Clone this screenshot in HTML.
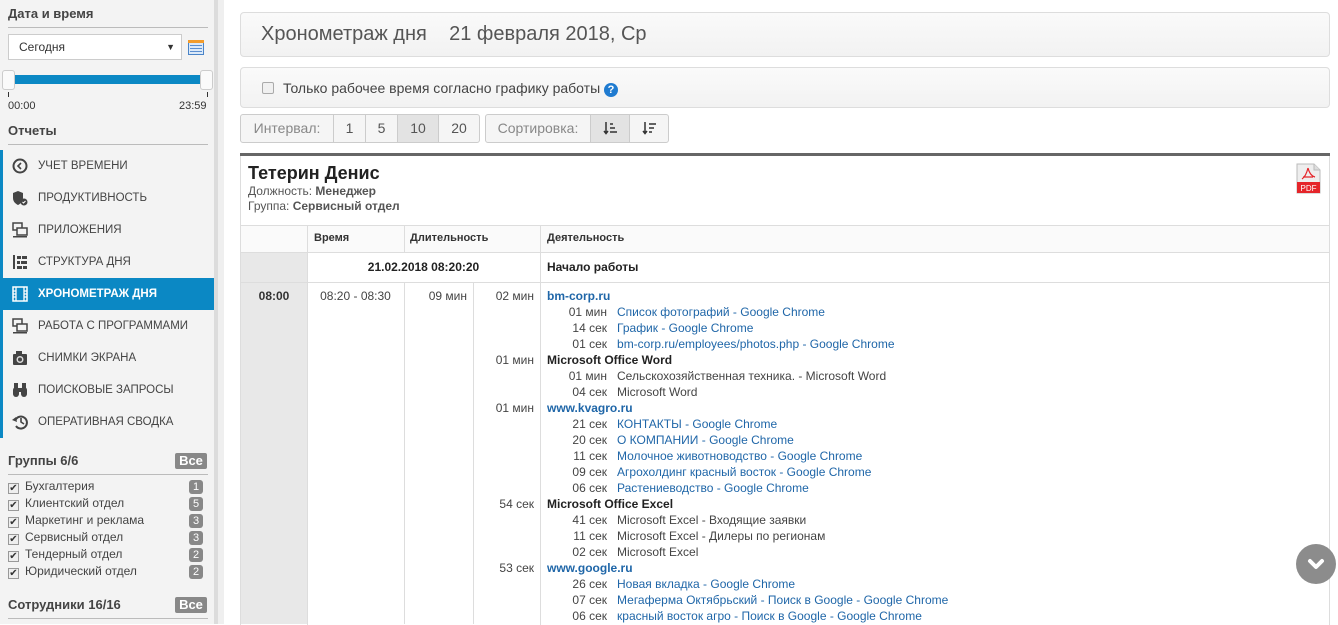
<!DOCTYPE html>
<html><head><meta charset="utf-8"><style>
*{box-sizing:border-box;margin:0;padding:0}
body{width:1338px;height:624px;overflow:hidden;background:#fff;font-family:"Liberation Sans",Arial,sans-serif;font-size:12px;color:#333;position:relative}
.a{position:absolute}
#sb{left:0;top:0;width:214px;height:624px;background:#f3f3f3}
.h{font-weight:bold;font-size:13px;color:#444;border-bottom:1px solid #bbb;left:8px;width:200px;height:22px}
.nav{left:0;width:208px;height:32px;line-height:32px;padding-left:38px;font-size:11.5px;color:#444}
.nav svg{position:absolute;left:12px;top:8px}
.grp{left:8px;font-size:12px;color:#444;height:17px;line-height:17px}
.cb{display:inline-block;width:11px;height:11px;border:1px solid #999;background:#eee;vertical-align:-1px;margin-right:6px;font-size:10px;line-height:9px;text-align:center;color:#333}
.bd{left:189px;width:14px;height:14px;background:#888;color:#fff;border-radius:3px;font-size:11px;text-align:center;line-height:14px}
.panel{border:1px solid #ddd;border-radius:4px;background:linear-gradient(#fafafa,#f2f2f2)}
.btn{height:29px;line-height:27px;border:1px solid #ccc;background:#f5f5f5;color:#555;font-size:14px;text-align:center}
.l{line-height:16px;height:16px;white-space:nowrap}
.r{text-align:right}
a{color:#1f66a8;text-decoration:none}
</style></head><body>
<div id="sb" class="a"></div>
<div class="a" style="left:214px;top:0;width:4px;height:624px;background:#dcdcdc"></div>
<div class="a" style="left:218px;top:0;width:6px;height:624px;background:#efefef"></div>

<div class="a h" style="top:6px">Дата и время</div>
<div class="a" style="left:8px;top:34px;width:174px;height:26px;border:1px solid #ccc;background:#fff;padding-left:10px;line-height:24px;color:#333">Сегодня<span class="a" style="right:6px;top:0;font-size:9px;color:#333">▼</span></div>
<svg class="a" style="left:188px;top:40px" width="16" height="15"><rect x="0.5" y="0.5" width="15" height="14" fill="#dbe9f8" stroke="#4a84c8"/><rect x="0" y="0" width="16" height="3" fill="#f39c2b"/><g fill="#5b8ed0"><rect x="2" y="5" width="12" height="1"/><rect x="2" y="8" width="12" height="1"/><rect x="2" y="11" width="12" height="1"/></g></svg>
<div class="a" style="left:10px;top:75px;width:196px;height:9px;background:#0b88c4"></div>
<div class="a" style="left:2px;top:70px;width:13px;height:20px;background:#fafafa;border:1px solid #ccc;border-radius:3px"></div>
<div class="a" style="left:200px;top:70px;width:13px;height:20px;background:#fafafa;border:1px solid #ccc;border-radius:3px"></div>
<div class="a" style="left:8px;top:92px;width:1px;height:5px;background:#333"></div>
<div class="a" style="left:207px;top:92px;width:1px;height:5px;background:#333"></div>
<div class="a" style="left:8px;top:100px;font-size:11px;color:#333">00:00</div>
<div class="a" style="left:179px;top:100px;font-size:11px;color:#333">23:59</div>

<div class="a h" style="top:123px">Отчеты</div>
<div class="a" style="left:0;top:150px;width:3px;height:288px;background:#0b88c4"></div>
<div class="a nav" style="top:150px"><svg width="16" height="16"><circle cx="8" cy="8" r="6.5" fill="none" stroke="#444" stroke-width="2"/><path d="M9 5 6 8 9 11" fill="none" stroke="#444" stroke-width="1.6"/></svg>УЧЕТ ВРЕМЕНИ</div>
<div class="a nav" style="top:182px"><svg width="16" height="16"><path d="M6 1 11 3v5c0 4-3 6-5 7-2-1-5-3-5-7V3z" fill="#444"/><circle cx="12" cy="12" r="3.5" fill="#444"/><path d="M10.5 12l1 1 2-2" stroke="#fff" fill="none"/></svg>ПРОДУКТИВНОСТЬ</div>
<div class="a nav" style="top:214px"><svg width="16" height="16"><rect x="1" y="1" width="9" height="7" fill="none" stroke="#444" stroke-width="1.5"/><rect x="5" y="6" width="10" height="7" fill="#f3f3f3" stroke="#444" stroke-width="1.5"/><rect x="1" y="14" width="14" height="1.5" fill="#444"/></svg>ПРИЛОЖЕНИЯ</div>
<div class="a nav" style="top:246px"><svg width="16" height="16"><rect x="1" y="1" width="2" height="14" fill="#444"/><g fill="#444"><rect x="5" y="2" width="4" height="3"/><rect x="10" y="2" width="5" height="3"/><rect x="5" y="7" width="3" height="3"/><rect x="9" y="7" width="6" height="3"/><rect x="5" y="12" width="5" height="3"/><rect x="11" y="12" width="4" height="3"/></g></svg>СТРУКТУРА ДНЯ</div>
<div class="a nav" style="top:278px;width:214px;background:#0b88c4;color:#fff;font-weight:bold"><svg width="16" height="16"><rect x="1" y="1" width="14" height="14" fill="none" stroke="#fff" stroke-width="1.5"/><path d="M4 1v14M12 1v14M1 5h3M1 8h3M1 11h3M12 5h3M12 8h3M12 11h3" stroke="#fff" stroke-width="1.3"/></svg>ХРОНОМЕТРАЖ ДНЯ</div>
<div class="a nav" style="top:310px"><svg width="16" height="16"><rect x="1" y="1" width="9" height="7" fill="none" stroke="#444" stroke-width="1.5"/><rect x="5" y="6" width="10" height="7" fill="#f3f3f3" stroke="#444" stroke-width="1.5"/><rect x="1" y="14" width="14" height="1.5" fill="#444"/></svg>РАБОТА С ПРОГРАММАМИ</div>
<div class="a nav" style="top:342px"><svg width="16" height="16"><rect x="1" y="4" width="14" height="11" rx="1" fill="#444"/><rect x="4" y="1" width="6" height="4" fill="#444"/><circle cx="8" cy="9.5" r="3.5" fill="#ddd"/><circle cx="8" cy="9.5" r="2" fill="#444"/></svg>СНИМКИ ЭКРАНА</div>
<div class="a nav" style="top:374px"><svg width="16" height="16"><rect x="1" y="5" width="6" height="10" rx="3" fill="#444"/><rect x="9" y="5" width="6" height="10" rx="3" fill="#444"/><rect x="6" y="6" width="4" height="4" fill="#444"/><rect x="2" y="1" width="4" height="5" fill="#444"/><rect x="10" y="1" width="4" height="5" fill="#444"/></svg>ПОИСКОВЫЕ ЗАПРОСЫ</div>
<div class="a nav" style="top:406px"><svg width="16" height="16"><path d="M3.5 6A6 6 0 1 1 4 12" fill="none" stroke="#444" stroke-width="2"/><path d="M0 6l4 -3 1 5z" fill="#444"/><path d="M9 4v4l3 2" fill="none" stroke="#444" stroke-width="1.6"/></svg>ОПЕРАТИВНАЯ СВОДКА</div>

<div class="a h" style="top:453px">Группы 6/6</div>
<div class="a" style="left:175px;top:453px;width:32px;height:16px;background:#888;color:#fff;font-weight:bold;font-size:13px;text-align:center;line-height:16px;border-radius:2px">Все</div>
<div class="a grp" style="top:478px"><span class="cb">✔</span>Бухгалтерия</div><div class="a bd" style="top:480px">1</div>
<div class="a grp" style="top:495px"><span class="cb">✔</span>Клиентский отдел</div><div class="a bd" style="top:497px">5</div>
<div class="a grp" style="top:512px"><span class="cb">✔</span>Маркетинг и реклама</div><div class="a bd" style="top:514px">3</div>
<div class="a grp" style="top:529px"><span class="cb">✔</span>Сервисный отдел</div><div class="a bd" style="top:531px">3</div>
<div class="a grp" style="top:546px"><span class="cb">✔</span>Тендерный отдел</div><div class="a bd" style="top:548px">2</div>
<div class="a grp" style="top:563px"><span class="cb">✔</span>Юридический отдел</div><div class="a bd" style="top:565px">2</div>
<div class="a h" style="top:597px">Сотрудники 16/16</div>
<div class="a" style="left:175px;top:597px;width:32px;height:16px;background:#888;color:#fff;font-weight:bold;font-size:13px;text-align:center;line-height:16px;border-radius:2px">Все</div>

<!-- main -->
<div class="a panel" style="left:240px;top:12px;width:1090px;height:45px;padding-left:20px;line-height:43px;font-size:20px;color:#555">Хронометраж дня&nbsp;&nbsp;&nbsp; 21 февраля 2018, Ср</div>
<div class="a panel" style="left:240px;top:67px;width:1090px;height:41px;padding-left:21px;line-height:40px;font-size:14px;color:#444"><span style="display:inline-block;width:12px;height:12px;border:1px solid #aaa;border-radius:2px;background:#f0f0f0;vertical-align:-1px;margin-right:9px"></span>Только рабочее время согласно графику работы <span style="display:inline-block;width:14px;height:14px;border-radius:50%;background:#1f7bd0;color:#fff;font-size:11px;font-weight:bold;text-align:center;line-height:14px;vertical-align:0">?</span></div>

<div class="a btn" style="left:240px;top:114px;width:94px;border-radius:3px 0 0 3px;color:#888">Интервал:</div>
<div class="a btn" style="left:333px;top:114px;width:33px">1</div>
<div class="a btn" style="left:365px;top:114px;width:33px">5</div>
<div class="a btn" style="left:397px;top:114px;width:42px;background:#e3e3e3">10</div>
<div class="a btn" style="left:438px;top:114px;width:42px;border-radius:0 3px 3px 0">20</div>
<div class="a btn" style="left:485px;top:114px;width:106px;border-radius:3px 0 0 3px;color:#888">Сортировка:</div>
<div class="a btn" style="left:590px;top:114px;width:40px;background:#e3e3e3"><svg width="14" height="14" style="vertical-align:-2px"><path d="M3 1v11M1 10l2 2.5L5 10" stroke="#333" fill="none" stroke-width="1.5"/><path d="M7 3h3M7 7h5M7 11h7" stroke="#333" stroke-width="1.5"/></svg></div>
<div class="a btn" style="left:629px;top:114px;width:40px;border-radius:0 3px 3px 0"><svg width="14" height="14" style="vertical-align:-2px"><path d="M3 1v11M1 10l2 2.5L5 10" stroke="#333" fill="none" stroke-width="1.5"/><path d="M7 3h7M7 7h5M7 11h3" stroke="#333" stroke-width="1.5"/></svg></div>

<div class="a" style="left:240px;top:153px;width:1090px;height:3px;background:#666"></div>
<div class="a" style="left:240px;top:156px;width:1px;height:70px;background:#ddd"></div>
<div class="a" style="left:1329px;top:156px;width:1px;height:70px;background:#ddd"></div>
<div class="a" style="left:248px;top:163px;font-size:18px;font-weight:bold;color:#222">Тетерин Денис</div>
<div class="a" style="left:248px;top:184px;font-size:12px;color:#555;line-height:15px">Должность: <b>Менеджер</b><br>Группа: <b>Сервисный отдел</b></div>
<svg class="a" style="left:1296px;top:163px" width="26" height="31"><path d="M1 1h17l6 6v23H1z" fill="#eee" stroke="#bbb"/><path d="M18 1v6h6" fill="#ddd" stroke="#bbb"/><rect x="1" y="19" width="23" height="11" fill="#e5252a"/><text x="12.5" y="28" font-size="8" fill="#fff" text-anchor="middle" font-family="Liberation Sans">PDF</text><path d="M12 5c-1 4 -3 9-6 11M12 5c1 4 3 8 7 9M7 14h10" stroke="#e5252a" fill="none" stroke-width="1.2"/></svg>

<!-- table -->
<div class="a" style="left:240px;top:225px;width:1090px;height:400px;border:1px solid #ddd;border-bottom:none"></div>
<div class="a" style="left:241px;top:253px;width:66px;height:371px;background:#e8e8e8"></div>
<div class="a" style="left:241px;top:226px;width:1088px;height:26px;background:#fafafa"></div>
<div class="a" style="left:240px;top:252px;width:1090px;height:1px;background:#ddd"></div>
<div class="a" style="left:240px;top:282px;width:1090px;height:1px;background:#ddd"></div>
<div class="a" style="left:307px;top:225px;width:1px;height:400px;background:#ddd"></div>
<div class="a" style="left:404px;top:225px;width:1px;height:28px;background:#ddd"></div>
<div class="a" style="left:404px;top:283px;width:1px;height:341px;background:#ddd"></div>
<div class="a" style="left:473px;top:283px;width:1px;height:341px;background:#ddd"></div>
<div class="a" style="left:540px;top:225px;width:1px;height:400px;background:#ddd"></div>
<div class="a" style="left:314px;top:232px;font-size:11px;font-weight:bold;color:#333">Время</div>
<div class="a" style="left:410px;top:232px;font-size:11px;font-weight:bold;color:#333">Длительность</div>
<div class="a" style="left:547px;top:232px;font-size:11px;font-weight:bold;color:#333">Деятельность</div>
<div class="a" style="left:307px;top:260px;width:233px;text-align:center;font-weight:bold;color:#222">21.02.2018 08:20:20</div>
<div class="a" style="left:547px;top:260px;font-weight:bold;color:#222">Начало работы</div>
<div class="a l" style="left:241px;top:288px;width:66px;text-align:center;font-weight:bold;color:#333">08:00</div>
<div class="a l" style="left:307px;top:288px;width:97px;text-align:center;color:#444">08:20 - 08:30</div>
<div class="a l r" style="left:404px;top:288px;width:63px;color:#444">09 мин</div>

<div class="a" style="left:473px;top:288px;width:800px;color:#444">
<div class="l"><span style="display:inline-block;width:61px" class="r">02 мин</span><span style="margin-left:13px;font-weight:bold"><a>bm-corp.ru</a></span></div>
<div class="l"><span style="display:inline-block;width:134px" class="r">01 мин</span>&nbsp;&nbsp;&nbsp;<a>Список фотографий - Google Chrome</a></div>
<div class="l"><span style="display:inline-block;width:134px" class="r">14 сек</span>&nbsp;&nbsp;&nbsp;<a>График - Google Chrome</a></div>
<div class="l"><span style="display:inline-block;width:134px" class="r">01 сек</span>&nbsp;&nbsp;&nbsp;<a>bm-corp.ru/employees/photos.php - Google Chrome</a></div>
<div class="l"><span style="display:inline-block;width:61px" class="r">01 мин</span><span style="margin-left:13px;font-weight:bold;color:#222">Microsoft Office Word</span></div>
<div class="l"><span style="display:inline-block;width:134px" class="r">01 мин</span>&nbsp;&nbsp;&nbsp;Сельскохозяйственная техника. - Microsoft Word</div>
<div class="l"><span style="display:inline-block;width:134px" class="r">04 сек</span>&nbsp;&nbsp;&nbsp;Microsoft Word</div>
<div class="l"><span style="display:inline-block;width:61px" class="r">01 мин</span><span style="margin-left:13px;font-weight:bold"><a>www.kvagro.ru</a></span></div>
<div class="l"><span style="display:inline-block;width:134px" class="r">21 сек</span>&nbsp;&nbsp;&nbsp;<a>КОНТАКТЫ - Google Chrome</a></div>
<div class="l"><span style="display:inline-block;width:134px" class="r">20 сек</span>&nbsp;&nbsp;&nbsp;<a>О КОМПАНИИ - Google Chrome</a></div>
<div class="l"><span style="display:inline-block;width:134px" class="r">11 сек</span>&nbsp;&nbsp;&nbsp;<a>Молочное животноводство - Google Chrome</a></div>
<div class="l"><span style="display:inline-block;width:134px" class="r">09 сек</span>&nbsp;&nbsp;&nbsp;<a>Агрохолдинг красный восток - Google Chrome</a></div>
<div class="l"><span style="display:inline-block;width:134px" class="r">06 сек</span>&nbsp;&nbsp;&nbsp;<a>Растениеводство - Google Chrome</a></div>
<div class="l"><span style="display:inline-block;width:61px" class="r">54 сек</span><span style="margin-left:13px;font-weight:bold;color:#222">Microsoft Office Excel</span></div>
<div class="l"><span style="display:inline-block;width:134px" class="r">41 сек</span>&nbsp;&nbsp;&nbsp;Microsoft Excel - Входящие заявки</div>
<div class="l"><span style="display:inline-block;width:134px" class="r">11 сек</span>&nbsp;&nbsp;&nbsp;Microsoft Excel - Дилеры по регионам</div>
<div class="l"><span style="display:inline-block;width:134px" class="r">02 сек</span>&nbsp;&nbsp;&nbsp;Microsoft Excel</div>
<div class="l"><span style="display:inline-block;width:61px" class="r">53 сек</span><span style="margin-left:13px;font-weight:bold"><a>www.google.ru</a></span></div>
<div class="l"><span style="display:inline-block;width:134px" class="r">26 сек</span>&nbsp;&nbsp;&nbsp;<a>Новая вкладка - Google Chrome</a></div>
<div class="l"><span style="display:inline-block;width:134px" class="r">07 сек</span>&nbsp;&nbsp;&nbsp;<a>Мегаферма Октябрьский - Поиск в Google - Google Chrome</a></div>
<div class="l"><span style="display:inline-block;width:134px" class="r">06 сек</span>&nbsp;&nbsp;&nbsp;<a>красный восток агро - Поиск в Google - Google Chrome</a></div>
</div>

<div class="a" style="left:1296px;top:544px;width:40px;height:40px;border-radius:50%;background:#8c8c8c"></div>
<svg class="a" style="left:1306px;top:555px" width="20" height="18"><path d="M4 6l6 6 6-6" stroke="#fff" stroke-width="4" fill="none" stroke-linecap="round" stroke-linejoin="round"/></svg>
</body></html>
